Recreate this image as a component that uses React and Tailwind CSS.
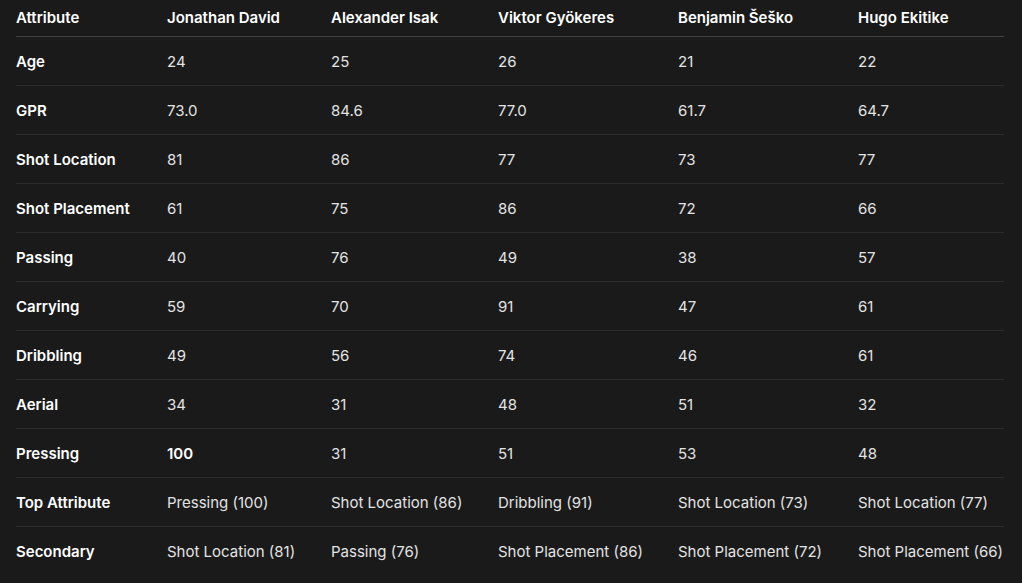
const players = ['Jonathan David', 'Alexander Isak', 'Viktor Gyökeres', 'Benjamin Šeško', 'Hugo Ekitike'];

// each row: label, values per player (strings), optional index of bolded value
const rows = [
  { label: 'Age', values: ['24', '25', '26', '21', '22'] },
  { label: 'GPR', values: ['73.0', '84.6', '77.0', '61.7', '64.7'] },
  { label: 'Shot Location', values: ['81', '86', '77', '73', '77'] },
  { label: 'Shot Placement', values: ['61', '75', '86', '72', '66'] },
  { label: 'Passing', values: ['40', '76', '49', '38', '57'] },
  { label: 'Carrying', values: ['59', '70', '91', '47', '61'] },
  { label: 'Dribbling', values: ['49', '56', '74', '46', '61'] },
  { label: 'Aerial', values: ['34', '31', '48', '51', '32'] },
  { label: 'Pressing', values: ['100', '31', '51', '53', '48'], bold: 0 },
  {
    label: 'Top Attribute',
    values: ['Pressing (100)', 'Shot Location (86)', 'Dribbling (91)', 'Shot Location (73)', 'Shot Location (77)'],
  },
  {
    label: 'Secondary',
    values: ['Shot Location (81)', 'Passing (76)', 'Shot Placement (86)', 'Shot Placement (72)', 'Shot Placement (66)'],
    last: true,
  },
];

const App = () => {
  return (
    <div
      className="min-h-screen bg-[#1a1a1a] px-4 text-[15px] text-[#ececec] antialiased"
      style={{ fontFamily: 'Inter, "Noto Sans", sans-serif' }}
    >
      <table className="w-[988px] table-fixed border-collapse">
        <colgroup>
          <col className="w-[151px]" />
          <col className="w-[164px]" />
          <col className="w-[167px]" />
          <col className="w-[180px]" />
          <col className="w-[180px]" />
          <col className="w-[146px]" />
        </colgroup>
        <thead>
          <tr className="border-b border-[#424242]">
            <th className="py-2 text-left font-semibold leading-5 text-white">Attribute</th>
            {players.map((p) => (
              <th key={p} className="py-2 text-left font-semibold leading-5 text-white">
                {p}
              </th>
            ))}
          </tr>
        </thead>
        <tbody>
          {rows.map((row) => (
            <tr key={row.label} className={row.last ? '' : 'border-b border-[#2c2c2c]'}>
              <td className="pt-[15px] pb-[13px] font-semibold leading-5 text-white">{row.label}</td>
              {row.values.map((v, i) => (
                <td
                  key={i}
                  className={
                    row.bold === i
                      ? 'pt-[15px] pb-[13px] font-semibold leading-5 text-white'
                      : 'pt-[15px] pb-[13px] leading-5 text-[#e3e3e3]'
                  }
                >
                  {v}
                </td>
              ))}
            </tr>
          ))}
        </tbody>
      </table>
    </div>
  );
};

export default App;
